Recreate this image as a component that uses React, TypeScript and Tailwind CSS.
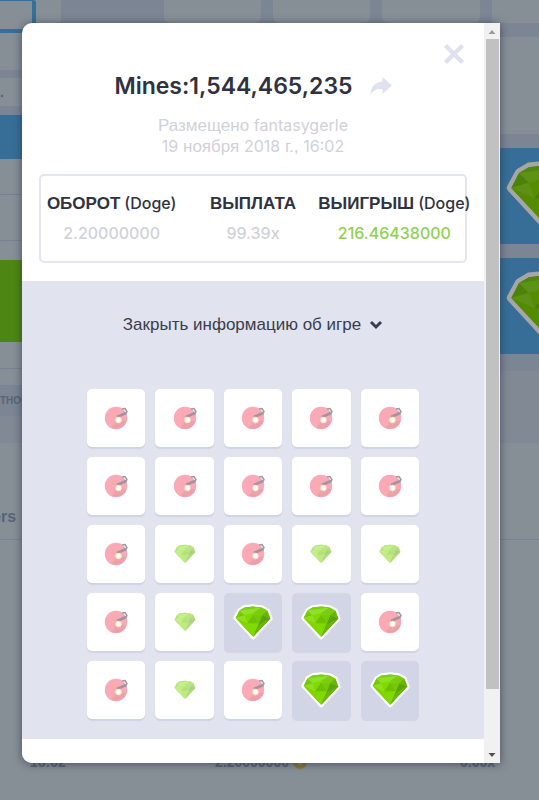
import { clsx } from "clsx";

type Kind = "mine" | "gem" | "hit";

const board: Kind[] = [
  "mine", "mine", "mine", "mine", "mine",
  "mine", "mine", "mine", "mine", "mine",
  "mine", "gem", "mine", "gem", "gem",
  "mine", "gem", "hit", "hit", "mine",
  "mine", "gem", "mine", "hit", "hit",
];

const latin = "font-['Inter',sans-serif]";

export default function App() {
  return (
    <div className="relative h-screen overflow-hidden bg-[#868e96] font-['Liberation_Sans',Arial,sans-serif]">
      <GamePage />
      <div className="absolute inset-0 pb-[37px] pl-[22px] pr-[39px] pt-[23px]">
        <BetDialog />
      </div>
    </div>
  );
}

function BetDialog() {
  return (
    <div
      role="dialog"
      aria-label="Mines"
      className="flex h-full overflow-hidden rounded-l-[10px] bg-white shadow-[0_1px_8px_rgba(30,40,55,0.6)]"
    >
      <div className="flex min-w-0 flex-1 flex-col">
        <header className="relative px-[17px] pb-[18px] pt-[47px]">
          <button type="button" aria-label="Закрыть" className="absolute right-[19px] top-5 text-[#dfe1f0]">
            <CloseIcon />
          </button>
          <div className="flex items-center justify-center gap-[17px]">
            <h1 className={clsx(latin, "text-[23px] font-semibold leading-8 text-[#2f3241]")}>Mines:1,544,465,235</h1>
            <button type="button" aria-label="Поделиться" className="text-[#dfe1f0]">
              <ShareIcon />
            </button>
          </div>
          <p className="mt-[13px] text-center text-[17px] leading-[21px] text-[#d0d1d8]">
            Размещено <span className={clsx(latin, "text-base leading-[21px]")}>fantasygerle</span>
            <br />
            <span className={clsx(latin, "text-base leading-[21px]")}>19</span> ноября{" "}
            <span className={clsx(latin, "text-base leading-[21px]")}>2018</span> г.,{" "}
            <span className={clsx(latin, "text-base leading-[21px]")}>16:02</span>
          </p>
          <dl className="mt-[17px] flex h-[89px] rounded-[5px] border-2 border-[#e3e5f2] pt-[15px]">
            <Stat label="ОБОРОТ" unit="(Doge)" value="2.20000000" />
            <Stat label="ВЫПЛАТА" value="99.39x" />
            <Stat label="ВЫИГРЫШ" unit="(Doge)" value="216.46438000" win />
          </dl>
        </header>

        <section className="flex flex-1 flex-col items-center bg-[#e1e3ef] pt-8">
          <button type="button" className="flex items-center gap-2 text-[17px] leading-6 text-[#3a3d4b]">
            Закрыть информацию об игре
            <ChevronIcon />
          </button>
          <div className="mt-[52px] grid w-[332px] grid-cols-5 gap-2.5">
            {board.map((kind, i) => (
              <Tile key={i} kind={kind} />
            ))}
          </div>
        </section>
        <div className="h-6 flex-none bg-white" />
      </div>
      <Scrollbar />
    </div>
  );
}

function Stat({ label, unit, value, win }: { label: string; unit?: string; value: string; win?: boolean }) {
  return (
    <div className="flex min-w-0 flex-1 flex-col items-center whitespace-nowrap">
      <dt className="flex h-6 items-baseline gap-1 text-[17px] font-bold leading-[26px] text-[#2f3241]">
        {label}
        {unit && <span className={clsx(latin, "text-base font-medium leading-6")}>{unit}</span>}
      </dt>
      <dd
        className={clsx(latin, "mt-1.5 text-base font-medium leading-6", win ? "text-[#90d052]" : "text-[#d0d1d8]")}
      >
        {value}
      </dd>
    </div>
  );
}

function Tile({ kind }: { kind: Kind }) {
  return (
    <div
      className={clsx(
        "flex h-[58px] items-center justify-center rounded-[5px]",
        kind === "hit" ? "bg-[#d2d5e5] shadow-[0_2px_0_#d2d5e5]" : "bg-white shadow-[0_2px_1px_#d0d3e5]",
      )}
    >
      {kind === "mine" && <MineIcon />}
      {kind === "gem" && <Gem className="h-5 w-[22px] opacity-50" />}
      {kind === "hit" && <Gem className="h-9 w-10" outlined />}
    </div>
  );
}

function Scrollbar() {
  return (
    <div className="flex w-4 flex-none flex-col items-center bg-[#f1f1f1]" aria-hidden="true">
      <svg className="h-4 w-4 flex-none" viewBox="0 0 16 16">
        <path d="M4.500 11 8 7l3.500 4z" fill="#9a9a9a" />
      </svg>
      <div className="h-[650px] w-[13px] bg-[#c1c1c1]" />
      <div className="flex-1" />
      <svg className="h-[18px] w-4 flex-none" viewBox="0 0 16 18">
        <path d="M4.500 8h7L8 12z" fill="#505050" />
      </svg>
    </div>
  );
}

function GamePage() {
  return (
    <div className="flex h-full text-[#586475]" aria-hidden="true">
      <div className="flex w-[61px] flex-none flex-col">
        <div className="mr-[25px] h-[33px] rounded-r-[3px] border-b-4 border-r-4 border-t border-[#366f98] bg-[#868e96]" />
        <div className="mt-px h-9" />
        <div className="h-2 bg-[#7b8594]" />
        <div className="h-7 text-sm font-bold leading-7">.</div>
        <div className="h-[9px] bg-[#7b8594]" />
        <div className="h-[44px] bg-[#376e98]" />
        <div className="h-9 border-b border-[#778191]" />
        <div className="h-[46px] border-b border-[#778191]" />
        <div className="h-[19px]" />
        <div className="h-[82px] bg-[#4e8613]" />
        <div className="h-[26px]" />
        <div className="h-[17px] border-t border-[#778191]" />
        <div className="h-[31px] bg-[#7b8594] text-[10px] font-bold leading-[31px]">ТНОСТЬ</div>
        <div className="h-[27px] bg-[#818994]" />
        <div className="-ml-2 h-[97px] border-b border-[#778191] pt-[62px] text-base font-bold leading-6">ers</div>
        <div className="mt-[214px] pl-[30px] text-sm font-bold leading-4">16:02</div>
      </div>

      <div className="flex min-w-0 flex-1 flex-col">
        <div className="grid h-[23px] flex-none grid-cols-[103px_97px_97px_98px_47px] gap-x-3 bg-[#7b8594]">
          <div className="-mr-3" />
          <div className="-ml-3 mr-3 rounded-b-md bg-[#868e96]" />
          <div className="-ml-3 mr-3 rounded-b-md bg-[#868e96]" />
          <div className="-ml-3 mr-3 rounded-b-md bg-[#868e96]" />
          <div className="-ml-3 bg-[#868e96]" />
        </div>
        <div className="flex flex-none flex-col items-end bg-[#7b8594] pb-[17px] pt-[14px]">
          <div className="h-[97px] w-[39px] bg-[#868e96]" />
          <div className="mt-[14px] flex h-24 w-[39px] items-center overflow-hidden bg-[#376e98]">
            <Gem className="ml-[6px] h-[72px] w-20 flex-none brightness-[0.65]" outlined />
          </div>
          <div className="mt-[14px] flex h-24 w-[39px] items-center overflow-hidden bg-[#376e98]">
            <Gem className="ml-[6px] h-[72px] w-20 flex-none brightness-[0.65]" outlined />
          </div>
        </div>
        <div className="h-[72px] flex-none bg-[#818994]" />
        <div className="h-[97px] flex-none border-b border-[#778191]" />
        <div className="mt-[214px] flex flex-none items-center pl-[154px] pr-11 text-sm font-bold leading-4">
          <span>2.20000000</span>
          <span className="ml-1 h-3.5 w-3.5 rounded-full border-4 border-[#8b7936]" />
          <span className="ml-auto">0.00x</span>
        </div>
      </div>
    </div>
  );
}

function Gem({ className, outlined }: { className: string; outlined?: boolean }) {
  return (
    <svg className={className} viewBox={outlined ? "31 42 121 111" : "36 46 112 102"}>
      {outlined && (
        <path
          d="M37 85 50 61 65 52 92 49 118 52 137 62 146 87 92 145Z"
          fill="#fff"
          stroke="#fff"
          strokeWidth="12"
          strokeLinejoin="round"
        />
      )}
      <path d="M38 85 50 62 65 53 92 50 118 53 136 63 145 87 92 143Z" fill="#82d900" />
      <path d="M50 62 65 53 92 50 118 53 72 66Z" fill="#79cf12" />
      <path d="M38 85 50 62 65 77Z" fill="#75c80e" />
      <path d="M50 62 118 53 92 70 65 77Z" fill="#8fe026" />
      <path d="M92 70 118 53 136 63 120 76Z" fill="#79cc0e" />
      <path d="M38 85 65 77 74 101Z" fill="#91de20" />
      <path d="M38 85 74 101 92 143Z" fill="#80d700" />
      <path d="M92 74 74 101 110 101Z" fill="#6cc000" />
      <path d="M92 74 120 76 110 101Z" fill="#76c908" />
      <path d="M120 76 136 63 145 87Z" fill="#68b50a" />
      <path d="M120 76 145 87 92 143 110 101Z" fill="#5aa508" />
      <path d="M145 87 110 105 92 143Z" fill="#6ab510" />
    </svg>
  );
}

function MineIcon() {
  return (
    <svg className="h-6 w-6" viewBox="0 0 24 24" fill="none">
      <circle cx="12" cy="12" r="11.200" fill="#fba8b7" />
      <path d="M12 15 22.500 15A11 11 0 0 1 8 22Z" fill="#ec9fae" />
      <path d="m8 7 3 5M13 16l-5 5M14 17l1 4M17 14l4 1" stroke="#e6b38b" strokeWidth="1.200" strokeDasharray="2 1" />
      <path d="m13 11 9-4" stroke="#a0959e" strokeWidth="2.800" />
      <path d="m18 3 3-.5 2 3-1.500 3" stroke="#9a9ba3" strokeWidth="1.500" />
      <circle cx="14.500" cy="14" r="3.200" fill="#fde3c4" />
      <circle cx="14.500" cy="14" r="2.300" fill="#fff" />
    </svg>
  );
}

function CloseIcon() {
  return (
    <svg width="22" height="22" viewBox="0 0 22 22" fill="none" stroke="currentColor" strokeWidth="4.500">
      <path d="m2.500 2.500 17 17M19.500 2.500l-17 17" />
    </svg>
  );
}

function ShareIcon() {
  return (
    <svg width="22" height="20" viewBox="0 0 22 20" fill="currentColor">
      <path d="M12.500 1 22 9.500 12.500 18v-5C7 12.500 3 14 .5 19 .5 11 5 6 12.500 5.500z" />
    </svg>
  );
}

function ChevronIcon() {
  return (
    <svg width="14" height="10" viewBox="0 0 14 10" fill="none" stroke="currentColor" strokeWidth="3">
      <path d="m2 2 5 5 5-5" />
    </svg>
  );
}
